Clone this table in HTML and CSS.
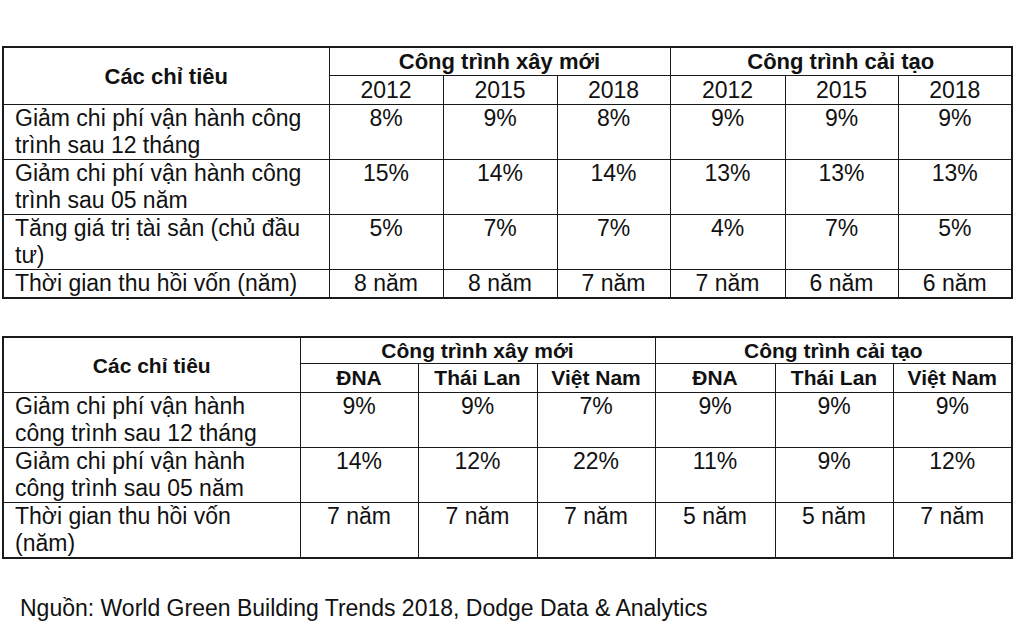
FILE: index.html
```html
<!DOCTYPE html>
<html lang="vi">
<head>
<meta charset="utf-8">
<link rel="stylesheet" href="styles.css">
</head>
<body>
<div class="page">
  <table class="tbl t1">
    <colgroup>
      <col class="c-first1"><col class="c114"><col class="c114"><col class="c113"><col class="c115"><col class="c113"><col class="c114">
    </colgroup>
    <tr class="h1">
      <th rowspan="2" class="lbl">Các chỉ tiêu</th>
      <th colspan="3">Công trình xây mới</th>
      <th colspan="3">Công trình cải tạo</th>
    </tr>
    <tr class="h2">
      <td>2012</td><td>2015</td><td>2018</td><td>2012</td><td>2015</td><td>2018</td>
    </tr>
    <tr>
      <td class="name">Giảm chi phí vận hành công trình sau 12 tháng</td>
      <td>8%</td><td>9%</td><td>8%</td><td>9%</td><td>9%</td><td>9%</td>
    </tr>
    <tr>
      <td class="name">Giảm chi phí vận hành công trình sau 05 năm</td>
      <td>15%</td><td>14%</td><td>14%</td><td>13%</td><td>13%</td><td>13%</td>
    </tr>
    <tr>
      <td class="name">Tăng giá trị tài sản (chủ đầu tư)</td>
      <td>5%</td><td>7%</td><td>7%</td><td>4%</td><td>7%</td><td>5%</td>
    </tr>
    <tr>
      <td class="name">Thời gian thu hồi vốn (năm)</td>
      <td>8 năm</td><td>8 năm</td><td>7 năm</td><td>7 năm</td><td>6 năm</td><td>6 năm</td>
    </tr>
  </table>

  <table class="tbl t2">
    <colgroup>
      <col class="c-first2"><col class="c118"><col class="c119"><col class="c118"><col class="c120"><col class="c118"><col class="c119">
    </colgroup>
    <tr class="h1">
      <th rowspan="2" class="lbl">Các chỉ tiêu</th>
      <th colspan="3">Công trình xây mới</th>
      <th colspan="3">Công trình cải tạo</th>
    </tr>
    <tr class="h2">
      <th>ĐNA</th><th>Thái Lan</th><th>Việt Nam</th><th>ĐNA</th><th>Thái Lan</th><th>Việt Nam</th>
    </tr>
    <tr>
      <td class="name">Giảm chi phí vận hành công trình sau 12 tháng</td>
      <td>9%</td><td>9%</td><td>7%</td><td>9%</td><td>9%</td><td>9%</td>
    </tr>
    <tr>
      <td class="name">Giảm chi phí vận hành công trình sau 05 năm</td>
      <td>14%</td><td>12%</td><td>22%</td><td>11%</td><td>9%</td><td>12%</td>
    </tr>
    <tr>
      <td class="name">Thời gian thu hồi vốn (năm)</td>
      <td>7 năm</td><td>7 năm</td><td>7 năm</td><td>5 năm</td><td>5 năm</td><td>7 năm</td>
    </tr>
  </table>

  <p class="source">Nguồn: World Green Building Trends 2018, Dodge Data &amp; Analytics</p>
</div>
</body>
</html>
```

FILE: styles.css
```css
html, body {
  margin: 0;
  padding: 0;
  background: #ffffff;
}

.page {
  padding: 46px 0 0 2px;
  font-family: "Liberation Sans", Arial, sans-serif;
  color: #111111;
}

.tbl {
  border-collapse: collapse;
  table-layout: fixed;
  border: 2px solid #1a1a1a;
}

.tbl td,
.tbl th {
  border: 1px solid #1a1a1a;
  padding: 0;
  text-align: center;
  vertical-align: top;
  font-size: 23px;
  line-height: 27px;
  font-weight: normal;
}

.tbl th {
  font-weight: bold;
}

.tbl .lbl {
  vertical-align: middle;
}

.tbl td.name {
  text-align: left;
  padding-left: 11px;
  padding-right: 4px;
}

/* table 1 */
.t1 {
  width: 1011px;
}
.t1 th {
  font-size: 22px;
}
.t1 .h1 {
  height: 27px;
}
.t1 .h2 {
  height: 29px;
}
.t1 .h2 td {
  line-height: 28px;
}
.c-first1 { width: 326px; }
.c113 { width: 113px; }
.c114 { width: 114px; }
.c115 { width: 115px; }

/* table 2 */
.t2 {
  width: 1011px;
  margin-top: 37px;
}
.t2 th {
  font-size: 21px;
}
.t2 .h1 {
  height: 26px;
}
.t2 .h1 th {
  line-height: 25px;
}
.t2 .h2 {
  height: 29px;
}
.t2 .h2 th {
  line-height: 28px;
}
.c-first2 { width: 297px; }
.c118 { width: 118px; }
.c119 { width: 119px; }
.c120 { width: 120px; }

.source {
  margin: 36px 0 0 18px;
  font-size: 23px;
  line-height: 27px;
}
```
